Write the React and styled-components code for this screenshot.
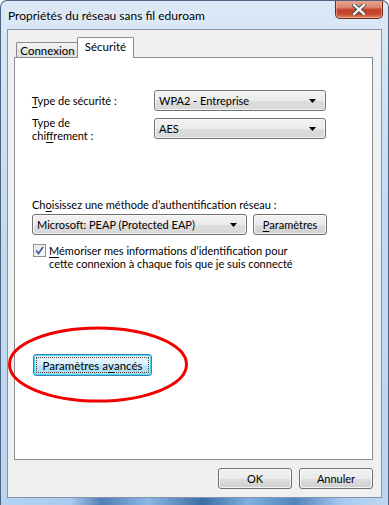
import React from 'react'
import styled, { createGlobalStyle } from 'styled-components'

const GlobalStyle = createGlobalStyle`
	html, body {
		margin: 0;
		padding: 0;
		background: #ffffff;
	}
	body {
		font-family: Lato, 'Noto Sans', sans-serif;
		font-size: 11px;
		color: #000;
	}
`

const Key = styled.span`
	text-decoration: underline;
	text-underline-offset: 2px;
`

const Arrow = () => (
	<svg width="7" height="4" viewBox="0 0 7 4">
		<path d="M0 0 H7 L3.5 4 Z" fill="#000" />
	</svg>
)

const Combo = ({ value, width }) => (
	<ComboBox style={{ width }}>
		<span>{value}</span>
		<Arrow />
	</ComboBox>
)

const App = () => {
	return (
		<>
			<GlobalStyle />
			<Window>
				<TitleBar>
					<Title>Propriétés du réseau sans fil eduroam</Title>
					<CloseButton>
						<svg width="14" height="11" viewBox="0 0 14 11">
							<path
								d="M2 1 L12 10 M12 1 L2 10"
								stroke="#3a3a3a"
								strokeWidth="4.2"
								strokeLinecap="square"
							/>
							<path
								d="M2 1 L12 10 M12 1 L2 10"
								stroke="#f4f4f4"
								strokeWidth="2.4"
								strokeLinecap="square"
							/>
						</svg>
					</CloseButton>
				</TitleBar>
				<Client>
					<TabRow>
						<Tab width={62}>Connexion</Tab>
						<Tab width={57} selected>
							Sécurité
						</Tab>
					</TabRow>
					<Panel>
						<FieldGrid>
							<Label>
								<Key>T</Key>ype de sécurité :
							</Label>
							<Combo value="WPA2 - Entreprise" width={172} />
							<Label>
								Type de
								<br />
								chi<Key>f</Key>frement :
							</Label>
							<Combo value="AES" width={172} />
						</FieldGrid>

						<MethodLabel>
							Ch<Key>o</Key>isissez une méthode d’authentification réseau :
						</MethodLabel>
						<MethodRow>
							<Combo value="Microsoft: PEAP (Protected EAP)" width={215} />
							<Button width={74}>
								<Key>P</Key>aramètres
							</Button>
						</MethodRow>
						<CheckRow>
							<CheckBox>
								<svg width="9" height="9" viewBox="0 0 9 9">
									<path
										d="M1 4.5 L3.5 7.5 L8 1"
										fill="none"
										stroke="#3d5fa8"
										strokeWidth="1.8"
									/>
								</svg>
							</CheckBox>
							<CheckText>
								<Key>M</Key>émoriser mes informations d’identification pour
								<br />
								cette connexion à chaque fois que je suis connecté
							</CheckText>
						</CheckRow>

						<AdvancedWrap>
							<FocusButton>
								<FocusRing>
									Paramètres a<Key>v</Key>ancés
								</FocusRing>
							</FocusButton>
							<Annotation width="182" height="78" viewBox="0 0 182 78">
								<ellipse
									cx="91"
									cy="38.5"
									rx="88.5"
									ry="36.5"
									fill="none"
									stroke="#f20000"
									strokeWidth="3"
								/>
							</Annotation>
						</AdvancedWrap>
					</Panel>
					<Footer>
						<Button width={74}>OK</Button>
						<Button width={74}>Annuler</Button>
					</Footer>
				</Client>
			</Window>
		</>
	)
}

const Window = styled.div`
	width: 389px;
	height: 505px;
	box-sizing: border-box;
	border: 1px solid #4d6180;
	border-bottom: none;
	border-radius: 7px 7px 0 0;
	display: flex;
	flex-direction: column;
	overflow: hidden;
	background:
		linear-gradient(
				90deg,
				#b7d3f2 0%,
				#a9cbef 18%,
				#4f7fb6 26%,
				#8bb7e4 38%,
				#3d6da6 52%,
				#7fb0e0 64%,
				#5283bb 76%,
				#a7c9ee 88%,
				#c0d8f3 100%
			)
			bottom / 100% 7px no-repeat,
		linear-gradient(180deg, #dbe8f6 0%, #c5dbf2 40%, #bcd4ef 100%);
`

const TitleBar = styled.div`
	height: 28px;
	flex: none;
	display: flex;
	align-items: flex-start;
	justify-content: space-between;
	padding: 0 5px 0 7px;
`

const Title = styled.div`
	margin-top: 7px;
	font-size: 12px;
	line-height: 16px;
	color: #000;
	text-shadow: 0 0 6px rgba(255, 255, 255, 0.9);
`

const CloseButton = styled.div`
	width: 48px;
	height: 19px;
	margin-top: -1px;
	box-sizing: border-box;
	border: 1px solid #6e2a22;
	border-top: none;
	border-radius: 0 0 5px 5px;
	display: flex;
	align-items: center;
	justify-content: center;
	background: linear-gradient(
		180deg,
		#e9a896 0%,
		#dc8670 40%,
		#c2412a 55%,
		#c6482c 78%,
		#e08a62 100%
	);
	box-shadow: inset 0 0 0 1px rgba(255, 210, 200, 0.45);
`

const Client = styled.div`
	flex: 1;
	margin: 0 6px 7px 6px;
	border: 1px solid #8393a9;
	background: #f0f0f0;
	padding: 7px 8px 7px 6px;
	display: flex;
	flex-direction: column;
`

const TabRow = styled.div`
	display: flex;
	align-items: flex-end;
	padding-left: 2px;
	height: 21px;
	position: relative;
	z-index: 1;
	margin-bottom: -1px;
`

const Tab = styled.div`
	box-sizing: border-box;
	width: ${p => p.width}px;
	height: ${p => (p.selected ? '21px' : '16px')};
	border: 1px solid #898c95;
	border-bottom: ${p => (p.selected ? 'none' : '1px solid #898c95')};
	border-right: ${p => (p.selected ? '1px solid #898c95' : 'none')};
	border-radius: 2px 2px 0 0;
	margin-left: ${p => (p.selected ? '-1px' : '0')};
	padding-top: ${p => (p.selected ? '2px' : '1px')};
	line-height: 14px;
	font-size: 11.5px;
	text-align: center;
	white-space: nowrap;
	background: ${p =>
		p.selected
			? '#ffffff'
			: 'linear-gradient(180deg, #f3f3f3 0%, #ebebeb 50%, #dedede 51%, #e4e4e4 100%)'};
	color: #000;
`

const Panel = styled.div`
	position: relative;
	height: 403px;
	box-sizing: border-box;
	border: 1px solid #898c95;
	background: #ffffff;
	padding: 32px 16px 0 16px;
	display: flex;
	flex-direction: column;
	align-items: flex-start;
`

const FieldGrid = styled.div`
	display: grid;
	grid-template-columns: 122px 172px;
	grid-auto-rows: 21px;
	row-gap: 7px;
	align-items: center;
	margin-left: 1px;
`

const Label = styled.div`
	line-height: 13px;
	white-space: nowrap;
`

const ComboBox = styled.div`
	box-sizing: border-box;
	height: 21px;
	border: 1px solid #707070;
	border-radius: 3px;
	background: linear-gradient(180deg, #f2f2f2 0%, #ebebeb 50%, #dddddd 51%, #d8d8d8 100%);
	display: flex;
	align-items: center;
	justify-content: space-between;
	padding: 0 9px 0 4px;
	box-shadow: inset 0 0 0 1px rgba(255, 255, 255, 0.7);
	white-space: nowrap;
`

const MethodLabel = styled.div`
	margin-top: 58px;
	line-height: 15px;
	white-space: nowrap;
	margin-left: 1px;
`

const MethodRow = styled.div`
	display: flex;
	gap: 6px;
	margin-top: 2px;
	margin-left: 1px;
`

const Button = styled.div`
	box-sizing: border-box;
	width: ${p => p.width}px;
	height: 21px;
	border: 1px solid #707070;
	border-radius: 3px;
	background: linear-gradient(180deg, #f2f2f2 0%, #ebebeb 50%, #dddddd 51%, #cfcfcf 100%);
	box-shadow: inset 0 0 0 1px rgba(255, 255, 255, 0.75);
	display: flex;
	align-items: center;
	justify-content: center;
	white-space: nowrap;
`

const CheckRow = styled.div`
	display: flex;
	align-items: flex-start;
	gap: 3px;
	margin-top: 9px;
	margin-left: 2px;
`

const CheckBox = styled.div`
	flex: none;
	width: 13px;
	height: 13px;
	box-sizing: border-box;
	border: 1px solid #8e8f8f;
	background: linear-gradient(135deg, #dcdcdc 0%, #f4f4f4 60%, #ffffff 100%);
	box-shadow: inset 0 0 0 1px #f4f4f4;
	display: flex;
	align-items: center;
	justify-content: center;
`

const CheckText = styled.div`
	line-height: 13px;
	white-space: nowrap;
`

const AdvancedWrap = styled.div`
	position: relative;
	margin-top: 84px;
	margin-left: 2px;
`

const FocusButton = styled.div`
	box-sizing: border-box;
	width: 119px;
	height: 22px;
	border: 1px solid #3c7fb1;
	border-radius: 3px;
	background: linear-gradient(180deg, #eaf6fd 0%, #d9f0fc 50%, #bee6fd 51%, #a7d9f5 100%);
	box-shadow: inset 0 0 0 1px #48dcf9;
	padding: 2px;
	display: flex;
`

const FocusRing = styled.div`
	flex: 1;
	border: 1px dotted #5a3a2a;
	display: flex;
	align-items: center;
	justify-content: center;
	white-space: nowrap;
	font-size: 11.5px;
`

const Annotation = styled.svg`
	position: absolute;
	left: -26px;
	top: -28px;
	pointer-events: none;
`

const Footer = styled.div`
	display: flex;
	justify-content: flex-end;
	gap: 7px;
	margin-top: 8px;
	padding-right: 0;
`

export default App
